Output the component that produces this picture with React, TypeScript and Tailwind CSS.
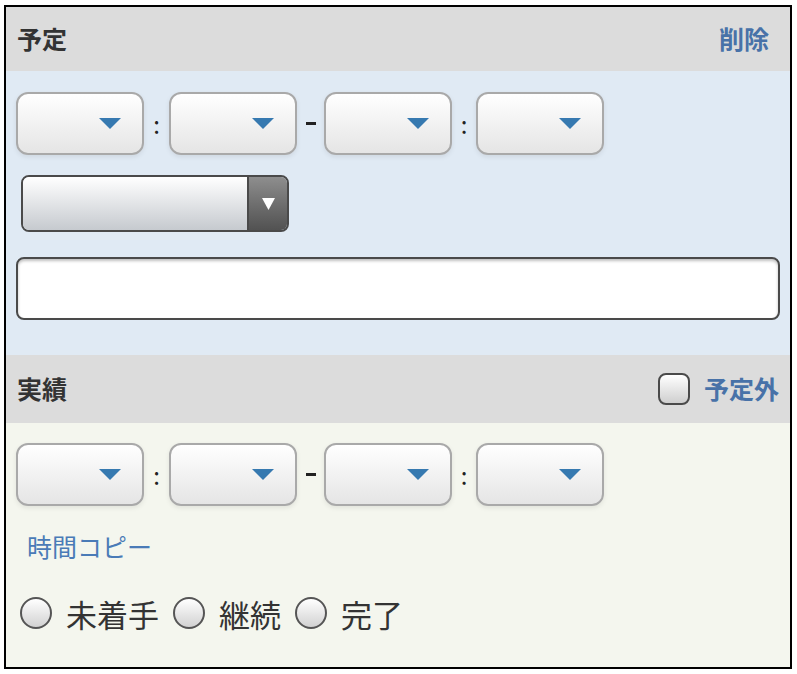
import React from "react";

const font = { fontFamily: '"Noto Sans CJK JP", "Noto Sans", sans-serif' };

const TimeSelect: React.FC = () => (
  <div className="flex h-[63px] w-[128px] items-center justify-end rounded-[12px] border-2 border-[#a9a9a9] bg-gradient-to-b from-white to-[#e5e5e5] pr-[21px] shadow-[0_2px_5px_rgba(0,0,0,0.08)]">
    <svg width="22" height="11" viewBox="0 0 22 11">
      <path d="M0 0H22L11 11Z" fill="#3679b0" />
    </svg>
  </div>
);

const Sep: React.FC<{ ch: string; w: string }> = ({ ch, w }) => (
  <div className={`${w} flex items-center justify-center text-[24px] text-[#222]`}>{ch}</div>
);

const TimeRow: React.FC = () => (
  <div className="flex items-center">
    <TimeSelect />
    <Sep ch=":" w="w-[25px]" />
    <TimeSelect />
    <div className="flex w-[27px] items-center justify-center">
      <span className="h-[3px] w-[10px] bg-[#222]" />
    </div>
    <TimeSelect />
    <Sep ch=":" w="w-[24px]" />
    <TimeSelect />
  </div>
);

const Radio: React.FC<{ label: string }> = ({ label }) => (
  <label className="flex items-center">
    <span className="h-[32px] w-[32px] rounded-full border-2 border-[#555] bg-gradient-to-b from-white to-[#d2d2d2]" />
    <span className="ml-[14px] mr-[14px] text-[31px] leading-none text-[#333]">{label}</span>
  </label>
);

export default function App() {
  return (
    <div className="min-h-screen bg-white pl-[4px] pt-[5px]" style={font}>
      <div className="flex h-[664px] w-[788px] flex-col border-2 border-black">
        {/* 予定 header */}
        <div className="flex h-[64px] items-center justify-between bg-[#dcdcdc] pl-[11px] pr-[21px]">
          <span className="text-[25px] font-bold text-[#333]">予定</span>
          <span className="text-[25px] font-bold text-[#4872a8]">削除</span>
        </div>

        {/* 予定 body */}
        <div className="bg-[#e0eaf4] pl-[10px] pr-[10px] pt-[21px] pb-[35px]">
          <TimeRow />

          <div className="ml-[5px] mt-[20px] flex h-[57px] w-[268px] overflow-hidden rounded-[8px] border-2 border-[#4a4a4a]">
            <div className="flex-1 bg-gradient-to-b from-white to-[#c6cacf]" />
            <div className="flex w-[40px] items-center justify-center border-l-2 border-[#4a4a4a] bg-gradient-to-b from-[#8e8e8e] to-[#525252]">
              <svg width="13" height="12" viewBox="0 0 13 12">
                <path d="M0 0H13L6.5 12Z" fill="#fff" />
              </svg>
            </div>
          </div>

          <div className="mt-[25px] h-[63px] w-[764px] rounded-[8px] border-2 border-[#4a4a4a] bg-white shadow-[inset_0_2px_3px_rgba(0,0,0,0.25)]" />
        </div>

        {/* 実績 header */}
        <div className="flex h-[68px] items-center justify-between bg-[#dcdcdc] pl-[11px] pr-[11px]">
          <span className="text-[25px] font-bold text-[#333]">実績</span>
          <label className="flex items-center">
            <span className="h-[32px] w-[32px] rounded-[8px] border-2 border-[#4a4a4a] bg-gradient-to-b from-white to-[#cfcfcf]" />
            <span className="ml-[14px] text-[25px] font-bold text-[#4872a8]">予定外</span>
          </label>
        </div>

        {/* 実績 body */}
        <div className="flex-1 bg-[#f4f6ee] pl-[10px] pt-[20px]">
          <TimeRow />
          <div className="ml-[11px] mt-[25px] text-[25px] leading-[30px] text-[#4a7bb7]">時間コピー</div>
          <div className="ml-[4px] mt-[36px] flex items-center">
            <Radio label="未着手" />
            <Radio label="継続" />
            <Radio label="完了" />
          </div>
        </div>
      </div>
    </div>
  );
}
